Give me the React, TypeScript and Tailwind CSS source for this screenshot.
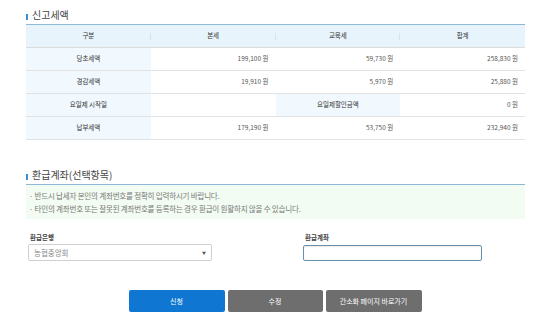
import React from "react";

const font = { fontFamily: '"Noto Sans CJK KR", "Noto Sans", sans-serif' };

interface Row {
  label: string;
  main: string;
  edu: string;
  total: string;
}

const rows: Row[] = [
  { label: "당초세액", main: "199,100 원", edu: "59,730 원", total: "258,830 원" },
  { label: "경감세액", main: "19,910 원", edu: "5,970 원", total: "25,880 원" },
  { label: "요일제 시작일", main: "", edu: "", total: "0 원" },
  { label: "납부세액", main: "179,190 원", edu: "53,750 원", total: "232,940 원" },
];

function SectionTitle({ text }: { text: string }) {
  return (
    <div className="flex items-center h-[14px]">
      <span className="w-[2px] h-[6px] bg-[#3a8fcf] mr-[4px] mt-[3px]" />
      <span className="text-[10px] leading-none text-[#444]">{text}</span>
    </div>
  );
}

export default function App() {
  return (
    <div className="w-[550px] h-[322px] bg-white overflow-hidden" style={font}>
      <div className="pl-[26px] pr-[25px]">
        {/* 신고세액 */}
        <div className="pt-[8px] h-[24px]">
          <SectionTitle text="신고세액" />
        </div>
        <div className="border-t border-[#8db8d6] text-[6.5px] text-[#555]">
          <div className="grid grid-cols-4 h-[23px] bg-[#e8f4fc] border-b border-[#dcdcdc] text-[#333]">
            {["구분", "본세", "교육세", "합계"].map((h, i) => (
              <div key={h} className="relative flex items-center justify-center">
                {h}
                {i < 3 && (
                  <span className="absolute right-0 top-[8px] w-px h-[7px] bg-[#d6e3ec]" />
                )}
              </div>
            ))}
          </div>
          {rows.map((r, idx) => (
            <div key={r.label} className="grid grid-cols-4 h-[23px] border-b border-[#e2e2e2]">
              <div className="flex items-center justify-center bg-[#f1f8fe] text-[#333]">{r.label}</div>
              <div className="flex items-center justify-end pr-[7px]">{r.main}</div>
              {idx === 2 ? (
                <div className="flex items-center justify-center bg-[#f1f8fe] text-[#333]">요일제할인금액</div>
              ) : (
                <div className="flex items-center justify-end pr-[7px]">{r.edu}</div>
              )}
              <div className="flex items-center justify-end pr-[7px]">{r.total}</div>
            </div>
          ))}
        </div>

        {/* 환급계좌 */}
        <div className="pt-[28px] h-[44px]">
          <SectionTitle text="환급계좌(선택항목)" />
        </div>
        <div className="border-t border-[#8db8d6] bg-[#f3fcf2] h-[35px] pt-[4px] pl-[3px] text-[7.5px] leading-[13px] tracking-[-0.2px] text-[#777]">
          <p>· 반드시 납세자 본인의 계좌번호를 정확히 입력하시기 바랍니다.</p>
          <p>· 타인의 계좌번호 또는 잘못된 계좌번호를 등록하는 경우 환급이 원활하지 않을 수 있습니다.</p>
        </div>

        <div className="flex pt-[14px]">
          <div className="w-[277px] pl-[2px]">
            <div className="text-[6.5px] font-bold text-[#444] h-[10px] pl-[2px]">환급은행</div>
            <div className="mt-[1px] w-[184px] h-[17px] border border-[#cfcfcf] rounded-[2px] bg-white flex items-center justify-between px-[5px]">
              <span className="text-[7.5px] text-[#888]">농협중앙회</span>
              <span className="text-[4px] text-[#555]">▼</span>
            </div>
          </div>
          <div>
            <div className="text-[6.5px] font-bold text-[#444] h-[10px] pl-[2px]">환급계좌</div>
            <div className="mt-[2px] w-[179px] h-[16px] border border-[#6a8fac] rounded-[2px] bg-white shadow-[inset_0_1px_1px_rgba(0,0,0,0.08)]" />
          </div>
        </div>
      </div>

      <div className="flex justify-center gap-[3px] pt-[29px] text-[7px] text-white">
        <button className="w-[96px] h-[22px] rounded-[2px] bg-[#0f77d2]">신청</button>
        <button className="w-[95px] h-[22px] rounded-[2px] bg-[#6e6e6e]">수정</button>
        <button className="w-[96px] h-[22px] rounded-[2px] bg-[#6e6e6e]">간소화 페이지 바로가기</button>
      </div>
    </div>
  );
}
